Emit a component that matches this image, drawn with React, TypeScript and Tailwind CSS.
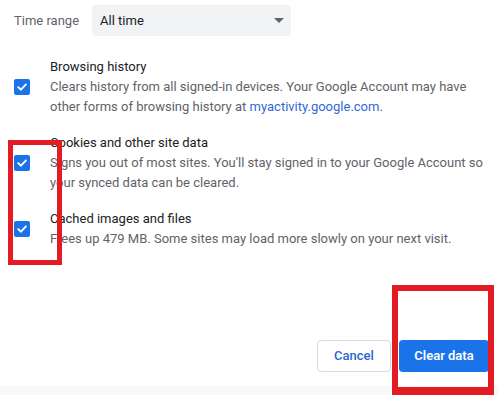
import React from "react";

function Check() {
  return (
    <div className="w-4 h-4 rounded-[2px] bg-[#1a73e8] flex items-center justify-center shrink-0">
      <svg width="12" height="12" viewBox="0 0 12 12" fill="none">
        <path d="M2.3 6.2 L4.9 8.7 L9.8 3.6" stroke="white" strokeWidth="1.8" strokeLinecap="square" />
      </svg>
    </div>
  );
}

function Item({ title, lines }: { title: string; lines: React.ReactNode[] }) {
  return (
    <div className="flex items-center">
      <div className="w-[36px] shrink-0">
        <Check />
      </div>
      <div className="flex flex-col leading-[20px] text-[13px]">
        <div className="text-[#202124]">{title}</div>
        {lines.map((l, i) => (
          <div key={i} className="text-[#5f6368] whitespace-nowrap">
            {l}
          </div>
        ))}
      </div>
    </div>
  );
}

export default function App() {
  return (
    <div
      className="relative w-[498px] h-[395px] bg-white overflow-hidden flex flex-col"
      style={{ fontFamily: "Roboto, 'Liberation Sans', sans-serif" }}
    >
      <div className="flex items-center pl-[14px] pt-[5px] gap-[13px]">
        <span className="text-[13px] text-[#5f6368]">Time range</span>
        <div className="w-[199px] h-[31px] bg-[#f1f3f4] rounded-[4px] flex items-center justify-between pl-[8px] pr-[7px]">
          <span className="text-[13px] text-[#202124]">All time</span>
          <svg width="10" height="5" viewBox="0 0 10 5">
            <path d="M0 0 L10 0 L5 5 Z" fill="#5f6368" />
          </svg>
        </div>
      </div>

      <div className="flex flex-col gap-[16px] pl-[14px] pt-[21px]">
        <Item
          title="Browsing history"
          lines={[
            "Clears history from all signed-in devices. Your Google Account may have",
            <>
              other forms of browsing history at <span className="text-[#3367d6]">myactivity.google.com</span>.
            </>,
          ]}
        />
        <Item
          title="Cookies and other site data"
          lines={[
            "Signs you out of most sites. You'll stay signed in to your Google Account so",
            "your synced data can be cleared.",
          ]}
        />
        <Item
          title="Cached images and files"
          lines={["Frees up 479 MB. Some sites may load more slowly on your next visit."]}
        />
      </div>

      <div className="flex-1" />

      <div className="flex justify-end gap-[8px] pr-[9px] pb-[14px]">
        <button className="w-[74px] h-[32px] rounded-[4px] border border-[#dadce0] bg-white text-[13px] font-medium text-[#2b66d4]">
          Cancel
        </button>
        <button className="w-[90px] h-[32px] rounded-[4px] bg-[#1a73e8] text-[13px] font-semibold text-white">
          Clear data
        </button>
      </div>
      <div className="h-[9px] bg-[#f8f8f8]" />

      <div className="absolute left-[8px] top-[140px] w-[54px] h-[125px] border-[5px] border-[#e31b23]" />
      <div className="absolute left-[392px] top-[285px] w-[102px] h-[110px] border-[6px] border-b-[8px] border-[#e31b23]" />
    </div>
  );
}
